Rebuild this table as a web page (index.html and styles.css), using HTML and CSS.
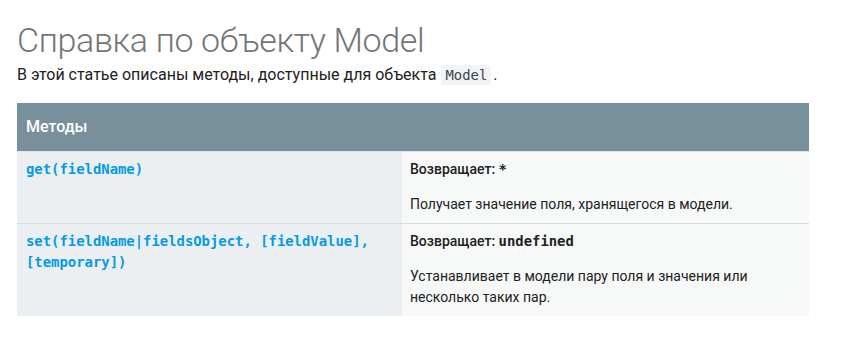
FILE: index.html
```html
<!DOCTYPE html>
<html lang="ru">
<head>
<meta charset="utf-8">
<title>Справка по объекту Model</title>
<link rel="stylesheet" href="styles.css">
</head>
<body>
<main class="page">
  <h1 class="title">Справка по объекту Model</h1>
  <p class="intro">В этой статье описаны методы, доступные для объекта <code class="inline-code">Model</code>.</p>
  <table class="methods">
    <thead>
      <tr><th colspan="2" class="head-cell">Методы</th></tr>
    </thead>
    <tbody>
      <tr class="row">
        <td class="sig"><a class="method-link" href="#get">get(fieldName)</a></td>
        <td class="desc">
          <p class="returns"><span class="returns-label">Возвращает:</span> <code class="ret-code">*</code></p>
          <p class="text">Получает значение поля, хранящегося в модели.</p>
        </td>
      </tr>
      <tr class="row">
        <td class="sig"><a class="method-link" href="#set">set(fieldName|fieldsObject, [fieldValue], [temporary])</a></td>
        <td class="desc">
          <p class="returns"><span class="returns-label">Возвращает:</span> <code class="ret-code">undefined</code></p>
          <p class="text">Устанавливает в модели пару поля и значения или несколько таких пар.</p>
        </td>
      </tr>
    </tbody>
  </table>
</main>
</body>
</html>
```

FILE: styles.css
```css
* { box-sizing: border-box; }
html, body { margin: 0; padding: 0; background: #fff; }
body {
  font-family: Roboto, "Noto Sans", sans-serif;
  color: #212121;
}
.page {
  padding: 20px 41px 0 17px;
}
.title {
  margin: 0;
  font-size: 34px;
  line-height: 40px;
  font-weight: 300;
  color: #757575;
  letter-spacing: -0.35px;
}
.intro {
  margin: 3px 0 16px;
  font-size: 16px;
  line-height: 24px;
}
.inline-code {
  font-family: "DejaVu Sans Mono", monospace;
  font-size: 13.9px;
  color: #37474f;
  background: #f1f3f4;
  padding: 2px 4px;
  border-radius: 2px;
  margin: 0 2px 0 1px;
}
.methods {
  width: 792px;
  border-collapse: collapse;
  font-size: 14px;
  line-height: 20px;
}
.head-cell {
  background: #78909c;
  color: #fff;
  text-align: left;
  font-size: 16px;
  font-weight: 500;
  line-height: 24px;
  padding: 12px 9px;
  height: 48px;
}
.row { border-top: 1px solid #d5dde0; }
.row:first-child { border-top: 1px solid #dde3e6; }
.sig {
  width: 385px;
  background: #eceff1;
  vertical-align: top;
  padding: 7px 9px 8px;
}
.desc {
  background: #f7f9f9;
  vertical-align: top;
  padding: 7px 8px 8px;
}
.method-link {
  font-family: "DejaVu Sans Mono", monospace;
  font-size: 13.9px;
  font-weight: bold;
  color: #039be5;
  text-decoration: none;
  line-height: 21px;
}
.returns, .text { margin: 0; }
.returns { margin-bottom: 15px; }
.returns-label { font-weight: 500; }
.ret-code {
  font-family: "DejaVu Sans Mono", monospace;
  font-size: 13.9px;
  font-weight: bold;
  color: #212121;
}
.text { line-height: 21px; }
```
